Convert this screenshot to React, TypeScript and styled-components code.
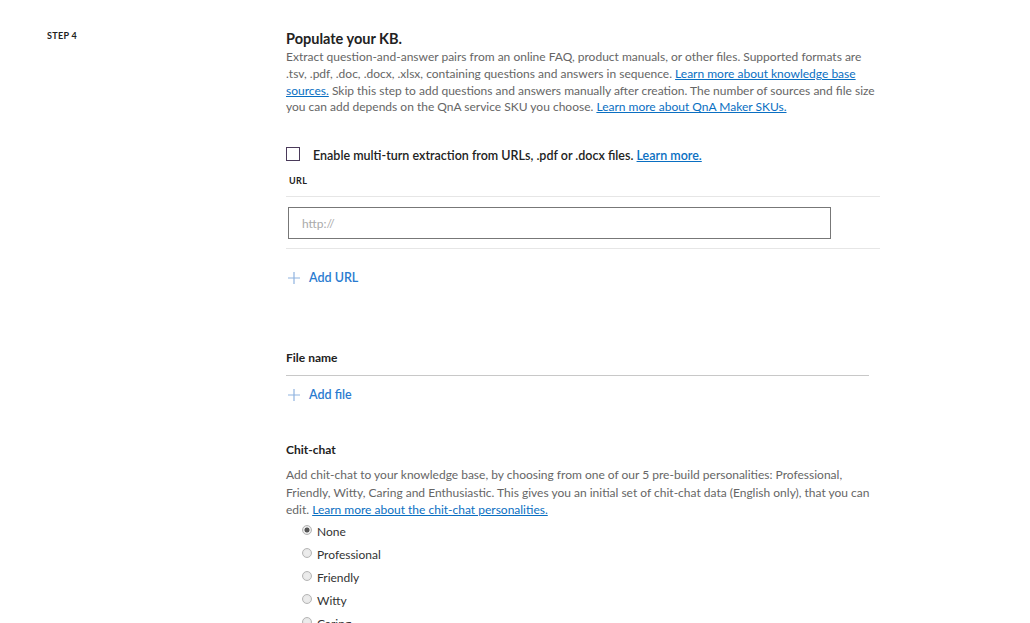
import React from "react";
import styled, { createGlobalStyle } from "styled-components";

const Global = createGlobalStyle`
  html, body { margin: 0; padding: 0; background: #fff; }
  body { font-family: Lato, "Liberation Sans", sans-serif; color: #222; }
  * { box-sizing: border-box; }
`;

const Page = styled.div`
  display: grid;
  grid-template-columns: 286px 594px;
  height: 623px;
  overflow: hidden;
`;

const StepCol = styled.div`
  padding: 30px 0 0 47px;
`;

const StepLabel = styled.div`
  font-size: 9px;
  font-weight: 700;
  letter-spacing: 0.3px;
  color: #222;
`;

const Content = styled.div`
  padding-top: 29px;
  display: flex;
  flex-direction: column;
`;

const Title = styled.h2`
  margin: 0;
  font-size: 14.5px;
  line-height: 20px;
  font-weight: 700;
  color: #222;
`;

const Desc = styled.p<{ lh?: number }>`
  margin: 0;
  font-size: 12px;
  line-height: ${(p) => p.lh ?? 16.8}px;
  color: #666;
  width: 590px;
`;

const Link = styled.a`
  color: #0a6fc2;
  text-decoration: underline;
`;

const CheckRow = styled.label`
  display: flex;
  align-items: center;
  gap: 13px;
  margin-top: 32px;
  font-size: 12.5px;
  font-weight: 600;
  color: #222;
`;

const Box = styled.span`
  width: 14px;
  height: 14px;
  border: 1px solid #4a3a5a;
  display: inline-block;
  margin-top: -4px;
`;

const SmallLabel = styled.div`
  margin: 12px 0 0 3px;
  font-size: 9px;
  font-weight: 700;
  letter-spacing: 0.4px;
  color: #222;
`;

const Rule = styled.div<{ w: number; c: string }>`
  width: ${(p) => p.w}px;
  height: 1px;
  background: ${(p) => p.c};
`;

const Spacer = styled.div<{ h: number }>`
  height: ${(p) => p.h}px;
`;

const InputWrap = styled.div`
  padding: 10px 0 9px 2px;
`;

const Input = styled.div`
  width: 543px;
  height: 32px;
  border: 1px solid #777;
  display: flex;
  align-items: center;
  padding-left: 13px;
  font-size: 12px;
  color: #aaa;
`;

const AddButton = styled.div<{ mt: number }>`
  display: flex;
  align-items: center;
  gap: 9px;
  margin: ${(p) => p.mt}px 0 0 2px;
  font-size: 12.5px;
  font-weight: 600;
  color: #2a7bd0;
`;

const SectionHeading = styled.div<{ mt: number }>`
  margin-top: ${(p) => p.mt}px;
  font-size: 12px;
  font-weight: 700;
  color: #222;
  line-height: 16px;
`;

const RadioList = styled.div`
  display: flex;
  flex-direction: column;
  gap: 6px;
  margin: 5px 0 0 16px;
`;

const RadioRow = styled.div`
  display: flex;
  align-items: center;
  gap: 5px;
  height: 17px;
  font-size: 12px;
  color: #333;
`;

const Dot = styled.span<{ on?: boolean }>`
  width: 10px;
  height: 10px;
  border-radius: 50%;
  border: 1px solid #b5b5b5;
  background: radial-gradient(circle, ${(p) => (p.on ? "#555 0 2.2px, #e8e8e8 2.8px" : "#ececec 0 2px, #e2e2e2 5px")});
  margin-top: -3px;
`;

const Plus = () => (
  <svg width="12" height="12" viewBox="0 0 12 12">
    <path d="M6 0v12M0 6h12" stroke="#8fb3e0" strokeWidth="1.2" />
  </svg>
);

const options = ["None", "Professional", "Friendly", "Witty", "Caring"];

export default function App() {
  return (
    <>
      <Global />
      <Page>
        <StepCol>
          <StepLabel>STEP 4</StepLabel>
        </StepCol>
        <Content>
          <Title>Populate your KB.</Title>
          <Desc>
            Extract question-and-answer pairs from an online FAQ, product manuals, or other files. Supported formats are
            .tsv, .pdf, .doc, .docx, .xlsx, containing questions and answers in sequence.{" "}
            <Link>Learn more about knowledge base sources.</Link> Skip this step to add questions and answers manually
            after creation. The number of sources and file size you can add depends on the QnA service SKU you choose.{" "}
            <Link>Learn more about QnA Maker SKUs.</Link>
          </Desc>
          <CheckRow>
            <Box />
            <span>
              Enable multi-turn extraction from URLs, .pdf or .docx files. <Link>Learn more.</Link>
            </span>
          </CheckRow>
          <SmallLabel>URL</SmallLabel>
          <Spacer h={10} />
          <Rule w={594} c="#e6e6e6" />
          <InputWrap>
            <Input>http://</Input>
          </InputWrap>
          <Rule w={594} c="#e6e6e6" />
          <AddButton mt={21}>
            <Plus />
            Add URL
          </AddButton>
          <SectionHeading mt={65}>File name</SectionHeading>
          <Spacer h={9} />
          <Rule w={583} c="#c8c8c8" />
          <AddButton mt={11}>
            <Plus />
            Add file
          </AddButton>
          <SectionHeading mt={40}>Chit-chat</SectionHeading>
          <Desc lh={17.4} style={{ marginTop: 8 }}>
            Add chit-chat to your knowledge base, by choosing from one of our 5 pre-build personalities: Professional,
            Friendly, Witty, Caring and Enthusiastic. This gives you an initial set of chit-chat data (English only), that
            you can edit. <Link>Learn more about the chit-chat personalities.</Link>
          </Desc>
          <RadioList>
            {options.map((o, i) => (
              <RadioRow key={o}>
                <Dot on={i === 0} />
                {o}
              </RadioRow>
            ))}
          </RadioList>
        </Content>
      </Page>
    </>
  );
}
